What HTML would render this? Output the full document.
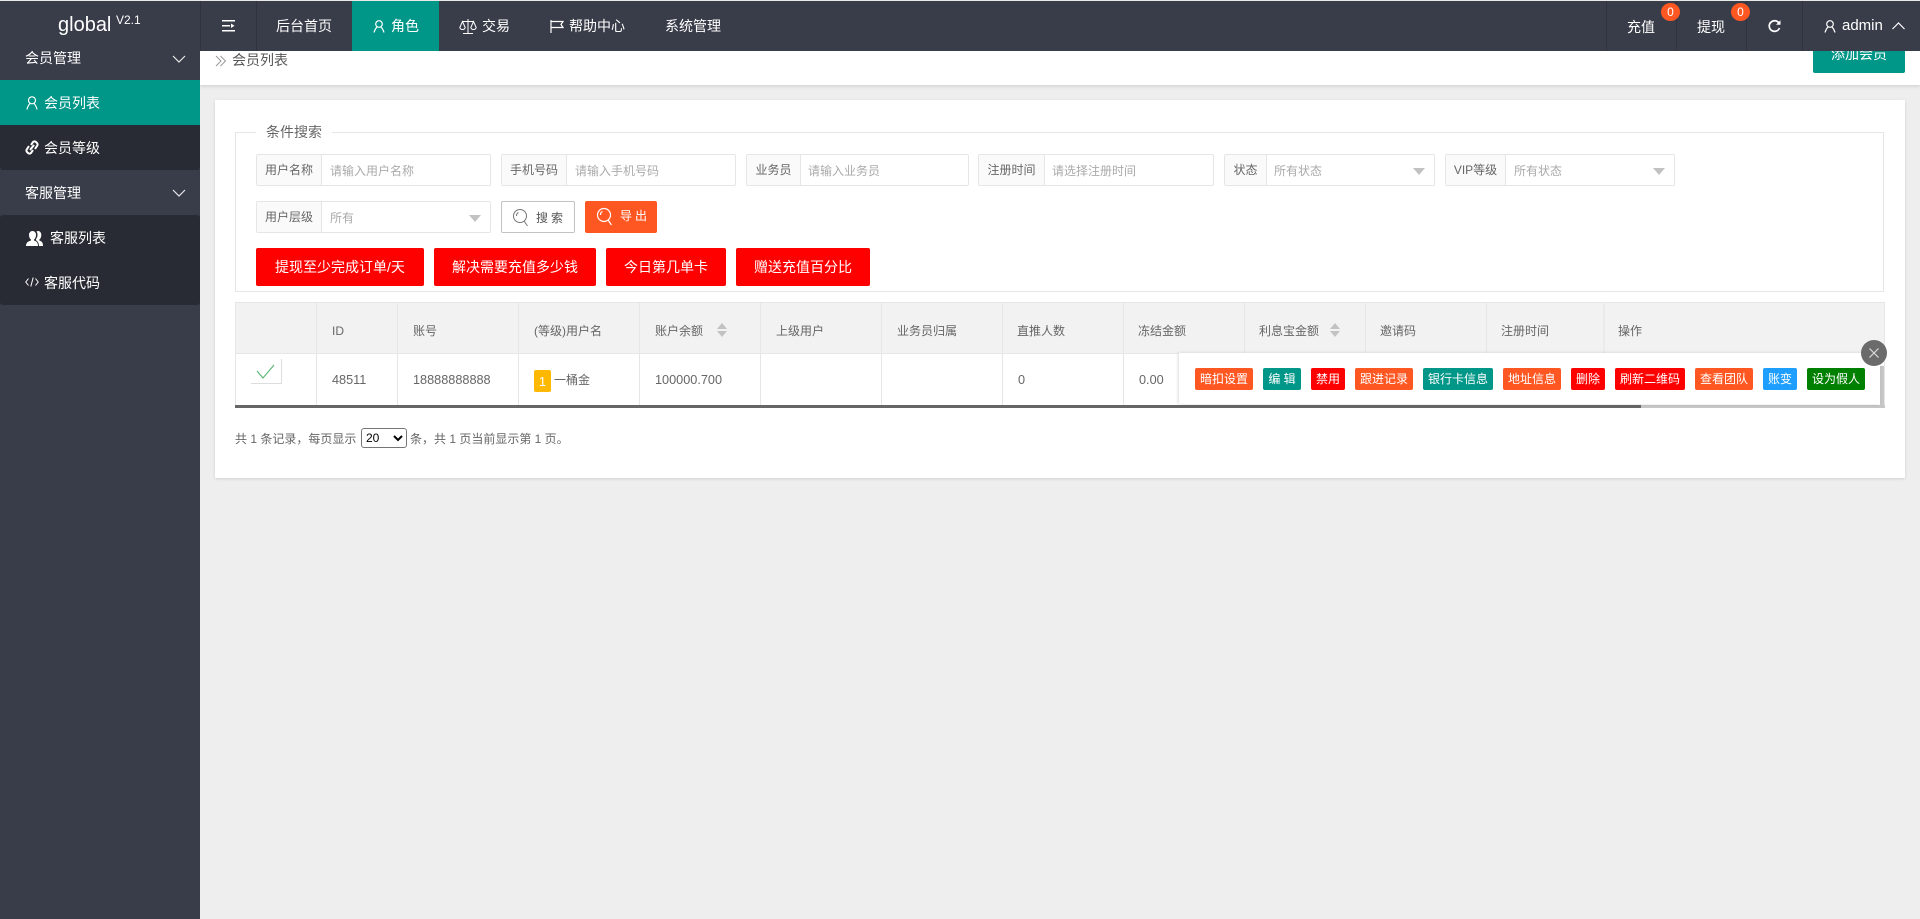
<!DOCTYPE html>
<html lang="zh"><head><meta charset="utf-8"><title>会员列表</title>
<style>
*{box-sizing:border-box;margin:0;padding:0}
html,body{width:1920px;height:919px;overflow:hidden;background:#eee;font-family:"Liberation Sans","Noto Sans CJK SC",sans-serif;font-size:14px;color:#666}
.a{position:absolute;white-space:nowrap}
.t{position:absolute;white-space:nowrap;height:20px;line-height:20px}
svg{position:absolute;display:block;overflow:visible}
.w{color:#fff}
.g{position:absolute;border:1px solid #e6e6e6;border-radius:2px;background:#fff;height:32px}
.g b{position:absolute;left:0;top:0;bottom:0;background:#fafafa;border-right:1px solid #e6e6e6;font-weight:400;font-size:12px;color:#666;text-align:center;line-height:30px}
.g i{position:absolute;top:0;font-style:normal;font-size:12px;color:#aaa;line-height:32px;white-space:nowrap}
.g u{position:absolute;top:13px;width:0;height:0;border:6px solid transparent;border-top:7px solid #c2c2c2;border-bottom:0;text-decoration:none}
.rb{position:absolute;top:248px;height:38px;background:#f00;color:#fff;border-radius:2px;font-size:14px;line-height:38px;text-align:center;white-space:nowrap}
.th{position:absolute;top:322px;height:20px;line-height:18px;font-size:12px;color:#666;white-space:nowrap}
.vl{position:absolute;width:1px;background:#e6e6e6}
.ab{position:absolute;top:368px;height:22px;line-height:22px;color:#fff;font-size:12px;text-align:center;border-radius:2px;white-space:nowrap}
.nv{position:absolute;width:1px;top:1px;height:50px;background:#30333e}
</style></head><body>

<!-- main background pieces -->
<div class="a" style="left:200px;top:51px;width:1720px;height:34px;background:#fff;box-shadow:0 1px 4px rgba(0,0,0,.15)"></div>
<svg style="left:215px;top:55px" width="12" height="12" viewBox="0 0 12 12" fill="none" stroke="#999" stroke-width="1"><path d="M1 1l5 5-5 5M5.500 1l5 5-5 5"/></svg>
<div class="t" style="left:232px;top:50px;font-size:14px;color:#555">会员列表</div>
<div class="a w" style="left:1813px;top:35px;width:92px;height:38px;line-height:38px;background:#009688;border-radius:2px;text-align:center;font-size:14px">添加会员</div>

<!-- card -->
<div class="a" style="left:215px;top:100px;width:1690px;height:378px;background:#fff;box-shadow:0 1px 3px rgba(0,0,0,.12)"></div>
<div class="a" style="left:235px;top:132px;width:1649px;height:160px;border:1px solid #e6e6e6"></div>
<div class="a" style="left:256px;top:125px;width:76px;height:14px;background:#fff"></div>
<div class="t" style="left:266px;top:122px;font-size:14px;color:#666">条件搜索</div>

<div class="g" style="left:256px;top:154px;width:235px"><b style="width:65px">用户名称</b><i style="left:73px">请输入用户名称</i></div>
<div class="g" style="left:501px;top:154px;width:235px"><b style="width:65px">手机号码</b><i style="left:73px">请输入手机号码</i></div>
<div class="g" style="left:746px;top:154px;width:223px"><b style="width:54px">业务员</b><i style="left:61px">请输入业务员</i></div>
<div class="g" style="left:978px;top:154px;width:236px"><b style="width:66px">注册时间</b><i style="left:73px">请选择注册时间</i></div>
<div class="g" style="left:1224px;top:154px;width:211px"><b style="width:42px">状态</b><i style="left:49px">所有状态</i><u style="right:9px"></u></div>
<div class="g" style="left:1445px;top:154px;width:230px"><b style="width:60px">VIP等级</b><i style="left:68px">所有状态</i><u style="right:9px"></u></div>

<div class="g" style="left:256px;top:201px;width:235px"><b style="width:65px">用户层级</b><i style="left:73px">所有</i><u style="right:9px"></u></div>
<div class="a" style="left:501px;top:201px;width:74px;height:32px;border:1px solid #c2c2c2;border-radius:2px;background:#fff"></div>
<svg style="left:512px;top:208px" width="18" height="20" viewBox="0 0 18 20" fill="none" stroke="#777" stroke-width="1"><circle cx="8" cy="8" r="6.500"/><path d="M4.500 8a3.500 3.500 0 0 1 2-3.500M12 13l3.500 5"/></svg>
<div class="t" style="left:536px;top:208px;font-size:12px;letter-spacing:3px;color:#555">搜索</div>
<div class="a" style="left:585px;top:201px;width:72px;height:32px;background:#FF5722;border-radius:2px"></div>
<svg style="left:596px;top:207px" width="18" height="20" viewBox="0 0 18 20" fill="none" stroke="#fff" stroke-width="1.200"><circle cx="8" cy="8" r="6.500"/><path d="M4.500 8a3.500 3.500 0 0 1 2-3.500M12 13l3.500 5"/></svg>
<div class="t w" style="left:620px;top:206px;font-size:12px;letter-spacing:3px">导出</div>

<div class="rb" style="left:256px;width:168px">提现至少完成订单/天</div>
<div class="rb" style="left:434px;width:162px">解决需要充值多少钱</div>
<div class="rb" style="left:606px;width:120px">今日第几单卡</div>
<div class="rb" style="left:736px;width:134px">赠送充值百分比</div>

<!-- table -->
<div class="a" style="left:235px;top:302px;width:1650px;height:52px;background:#f2f2f2;border:1px solid #e6e6e6"></div>
<div class="a" style="left:235px;top:354px;width:1650px;height:51px;border-left:1px solid #e6e6e6;border-right:1px solid #e6e6e6"></div>
<div class="vl" style="left:316px;top:302px;height:103px"></div>
<div class="vl" style="left:397px;top:302px;height:103px"></div>
<div class="vl" style="left:518px;top:302px;height:103px"></div>
<div class="vl" style="left:639px;top:302px;height:103px"></div>
<div class="vl" style="left:760px;top:302px;height:103px"></div>
<div class="vl" style="left:881px;top:302px;height:103px"></div>
<div class="vl" style="left:1002px;top:302px;height:103px"></div>
<div class="vl" style="left:1123px;top:302px;height:103px"></div>
<div class="vl" style="left:1244px;top:302px;height:51px"></div>
<div class="vl" style="left:1365px;top:302px;height:51px"></div>
<div class="vl" style="left:1486px;top:302px;height:51px"></div>
<div class="a" style="left:1603px;top:302px;width:2px;height:51px;background:#ebebeb"></div>

<div class="th" style="left:332px">ID</div>
<div class="th" style="left:413px">账号</div>
<div class="th" style="left:534px">(等级)用户名</div>
<div class="th" style="left:655px">账户余额</div>
<div class="a" style="left:717px;top:323px;border:5px solid transparent;border-bottom:6px solid #c2c2c2;border-top:0"></div>
<div class="a" style="left:717px;top:331px;border:5px solid transparent;border-top:6px solid #c2c2c2;border-bottom:0"></div>
<div class="th" style="left:776px">上级用户</div>
<div class="th" style="left:897px">业务员归属</div>
<div class="th" style="left:1017px">直推人数</div>
<div class="th" style="left:1138px">冻结金额</div>
<div class="th" style="left:1259px">利息宝金额</div>
<div class="a" style="left:1330px;top:323px;border:5px solid transparent;border-bottom:6px solid #c2c2c2;border-top:0"></div>
<div class="a" style="left:1330px;top:331px;border:5px solid transparent;border-top:6px solid #c2c2c2;border-bottom:0"></div>
<div class="th" style="left:1380px">邀请码</div>
<div class="th" style="left:1501px">注册时间</div>
<div class="th" style="left:1618px">操作</div>

<div class="a" style="left:251px;top:359px;width:31px;height:25px;border-right:1px solid #ddd;border-bottom:1px solid #ddd;background:#fff"></div>
<svg style="left:256px;top:364px" width="20" height="16" viewBox="0 0 20 16" fill="none" stroke="#5FB878" stroke-width="1.200"><path d="M1 7l6 7L18 1"/></svg>
<div class="t" style="left:332px;top:370px;font-size:12.700px;color:#666">48511</div>
<div class="t" style="left:413px;top:370px;font-size:12.700px;color:#666">18888888888</div>
<div class="a w" style="left:534px;top:370px;width:17px;height:22px;line-height:24px;background:#FFB800;border-radius:2px;text-align:center;font-size:13px">1</div>
<div class="t" style="left:554px;top:370px;font-size:12px;color:#666">一桶金</div>
<div class="t" style="left:655px;top:370px;font-size:12.700px;color:#666">100000.700</div>
<div class="t" style="left:1018px;top:370px;font-size:12.700px;color:#666">0</div>
<div class="t" style="left:1139px;top:370px;font-size:12.700px;color:#666">0.00</div>

<div class="a" style="left:235px;top:405px;width:1650px;height:3px;background:#c6c6c6"></div>
<div class="a" style="left:235px;top:405px;width:1406px;height:3px;background:#666"></div>

<!-- popup row -->
<div class="a" style="left:1880px;top:366px;width:4px;height:42px;background:#c6c6c6"></div>
<div class="a" style="left:1179px;top:353px;width:701px;height:51px;background:#fff;box-shadow:-1px 0 3px rgba(0,0,0,.14)"></div>
<div class="ab" style="left:1195px;width:58px;background:#FF5722">暗扣设置</div>
<div class="ab" style="left:1263px;width:38px;background:#009688">编 辑</div>
<div class="ab" style="left:1311px;width:34px;background:#f00">禁用</div>
<div class="ab" style="left:1355px;width:58px;background:#FF5722">跟进记录</div>
<div class="ab" style="left:1423px;width:70px;background:#009688">银行卡信息</div>
<div class="ab" style="left:1503px;width:58px;background:#FF5722">地址信息</div>
<div class="ab" style="left:1571px;width:34px;background:#f00">删除</div>
<div class="ab" style="left:1615px;width:70px;background:#f00">刷新二维码</div>
<div class="ab" style="left:1695px;width:58px;background:#FF5722">查看团队</div>
<div class="ab" style="left:1763px;width:34px;background:#1E9FFF">账变</div>
<div class="ab" style="left:1807px;width:58px;background:#008000">设为假人</div>
<div class="a" style="left:1861px;top:340px;width:26px;height:26px;border-radius:50%;background:#6b6b6b"></div>
<svg style="left:1869px;top:348px" width="10" height="10" viewBox="0 0 10 10" fill="none" stroke="#ddd" stroke-width="1.200"><path d="M.5 .5l9 9M9.500 .5l-9 9"/></svg>

<!-- pager -->
<div class="t" style="left:235px;top:429px;font-size:12px;color:#666">共 1 条记录，每页显示</div>
<select class="a" style="left:361px;top:428px;width:46px;height:20px;font-size:12px;font-family:'Liberation Sans',sans-serif;color:#000;background:#fff;border:1px solid #767676;border-radius:3px"><option>20</option></select>
<div class="t" style="left:410px;top:429px;font-size:12px;color:#666">条，共 1 页当前显示第 1 页。</div>

<!-- sidebar -->
<div class="a" style="left:0;top:51px;width:200px;height:868px;background:#393D49"></div>
<div class="t w" style="left:25px;top:48px;font-size:14px">会员管理</div>
<svg style="left:172px;top:55px" width="14" height="8" viewBox="0 0 14 8" fill="none" stroke="#e8e8e8" stroke-width="1.200"><path d="M1 1l6 6 6-6"/></svg>
<div class="a" style="left:0;top:80px;width:200px;height:45px;background:#009688"></div>
<svg style="left:26px;top:96px" width="12" height="14" viewBox="0 0 12 14" fill="none" stroke="#fff" stroke-width="1.200"><circle cx="6" cy="4.300" r="3.500"/><path d="M4 7.500C2.500 9 1.500 11 1 13.500M8 7.500c1.500 1.500 2.500 3.500 3 6"/></svg>
<div class="t w" style="left:44px;top:93px;font-size:14px">会员列表</div>
<div class="a" style="left:0;top:125px;width:200px;height:45px;background:#282B33;border-radius:0 0 3px 3px"></div>
<svg style="left:25px;top:140px" width="14" height="15" viewBox="0 0 14 15" fill="none" stroke="#fff" stroke-width="2"><path d="M6 5l2-3a2.200 2.200 0 0 1 3 0l1 1a2.200 2.200 0 0 1 0 3L10 9M8 10l-2 3a2.200 2.200 0 0 1-3 0l-1-1a2.200 2.200 0 0 1 0-3l2-3M5 10l4-5"/></svg>
<div class="t w" style="left:44px;top:138px;font-size:14px">会员等级</div>
<div class="t w" style="left:25px;top:183px;font-size:14px">客服管理</div>
<svg style="left:172px;top:189px" width="14" height="8" viewBox="0 0 14 8" fill="none" stroke="#e8e8e8" stroke-width="1.200"><path d="M1 1l6 6 6-6"/></svg>
<div class="a" style="left:0;top:215px;width:200px;height:90px;background:#282B33;border-radius:3px"></div>
<svg style="left:26px;top:231px" width="19" height="15" viewBox="0 0 19 15" fill="#fff"><path d="M6.500 0a3.500 3.500 0 0 1 3.500 4c0 2-1 4-2 4.500v1c2 .7 4 1.500 4 5.500H0c0-4 3-4.800 5-5.500v-1C4 8 3 6 3 4a3.500 3.500 0 0 1 3.500-4zM12 0c2 0 3.300 1.700 3.300 4s-1 4-2 4.500v1c2 .7 3.700 1.500 3.700 5.500h-4c0-3-1.500-4.800-3-5.700V8c1-1 1.500-2.500 1.500-4 0-1.500-.3-2.700-1-3.500.4-.3 1-.5 1.500-.5z"/></svg>
<div class="t w" style="left:50px;top:228px;font-size:14px">客服列表</div>
<svg style="left:25px;top:277px" width="14" height="10" viewBox="0 0 14 10" fill="none" stroke="#fff" stroke-width="1"><path d="M3.500 1.500L.8 5l2.700 3.500M10.500 1.500L13.200 5l-2.700 3.500M8.200 .5L5.800 9.500"/></svg>
<div class="t w" style="left:44px;top:273px;font-size:14px">客服代码</div>

<!-- header -->
<div class="a" style="left:0;top:0;width:1920px;height:1px;background:#e9e9ea"></div>
<div class="a" style="left:0;top:1px;width:1920px;height:50px;background:#393D49"></div>
<div class="a" style="left:200px;top:1px;width:1px;height:50px;background:#30333e"></div>
<div class="t w" style="left:58px;top:15px;font-size:20px;line-height:20px">global</div>
<div class="t w" style="left:116px;top:10px;font-size:12px">V2.1</div>
<div class="nv" style="left:256px"></div>
<svg style="left:222px;top:20px" width="13" height="12" viewBox="0 0 13 12" fill="#fff"><path d="M0 0h13v1.500H0zM0 10h13v1.500H0zM0 5h8v1.500H0zM9 3.500L12.500 5.800 9 8z"/></svg>
<div class="t w" style="left:276px;top:16px;font-size:14px">后台首页</div>
<div class="a" style="left:352px;top:1px;width:87px;height:50px;background:#009688"></div>
<svg style="left:373px;top:20px" width="12" height="13" viewBox="0 0 12 13" fill="none" stroke="#fff" stroke-width="1.200"><circle cx="6" cy="4" r="3.300"/><path d="M4 7C2.500 8.500 1.500 10.500 1 12.500M8 7c1.500 1.500 2.500 3.500 3 5.500"/></svg>
<div class="t w" style="left:391px;top:16px;font-size:14px">角色</div>
<svg style="left:459px;top:19px" width="18" height="15" viewBox="0 0 18 15" fill="none" stroke="#fff" stroke-width="1"><path d="M9 0v14M4 14.500h10M3 2.500h12M3.500 2.500L.8 8.500a2.800 2.800 0 0 0 5.400 0zM14.500 2.500l-2.700 6a2.800 2.800 0 0 0 5.400 0z"/></svg>
<div class="t w" style="left:482px;top:16px;font-size:14px">交易</div>
<svg style="left:550px;top:20px" width="14" height="13" viewBox="0 0 14 13" fill="none" stroke="#fff" stroke-width="1.200"><path d="M1 0v13M1 1.500h12l-2 3 2 3H1"/></svg>
<div class="t w" style="left:569px;top:16px;font-size:14px">帮助中心</div>
<div class="t w" style="left:665px;top:16px;font-size:14px">系统管理</div>

<div class="nv" style="left:1606px"></div>
<div class="nv" style="left:1676px"></div>
<div class="nv" style="left:1746px"></div>
<div class="nv" style="left:1802px"></div>
<div class="t w" style="left:1627px;top:17px;font-size:14px">充值</div>
<div class="a w" style="left:1661px;top:3px;width:19px;height:18px;line-height:18px;border-radius:50%;background:#FF5722;text-align:center;font-size:12px">0</div>
<div class="t w" style="left:1697px;top:17px;font-size:14px">提现</div>
<div class="a w" style="left:1731px;top:3px;width:19px;height:18px;line-height:18px;border-radius:50%;background:#FF5722;text-align:center;font-size:12px">0</div>
<svg style="left:1768px;top:20px" width="13" height="13" viewBox="0 0 13 13" fill="none" stroke="#fff" stroke-width="1.700"><path d="M11.500 8a5.300 5.300 0 1 1-.6-5"/><path d="M12.500 .2v4.600H8" fill="#fff" stroke="none"/></svg>
<svg style="left:1824px;top:20px" width="12" height="13" viewBox="0 0 12 13" fill="none" stroke="#fff" stroke-width="1.200"><circle cx="6" cy="4" r="3.300"/><path d="M4 7C2.500 8.500 1.500 10.500 1 12.500M8 7c1.500 1.500 2.500 3.500 3 5.500"/></svg>
<div class="t w" style="left:1842px;top:16px;font-size:15px">admin</div>
<svg style="left:1892px;top:22px" width="13" height="8" viewBox="0 0 13 8" fill="none" stroke="#fff" stroke-width="1.200"><path d="M.5 7l6-6 6 6"/></svg>
</body></html>
